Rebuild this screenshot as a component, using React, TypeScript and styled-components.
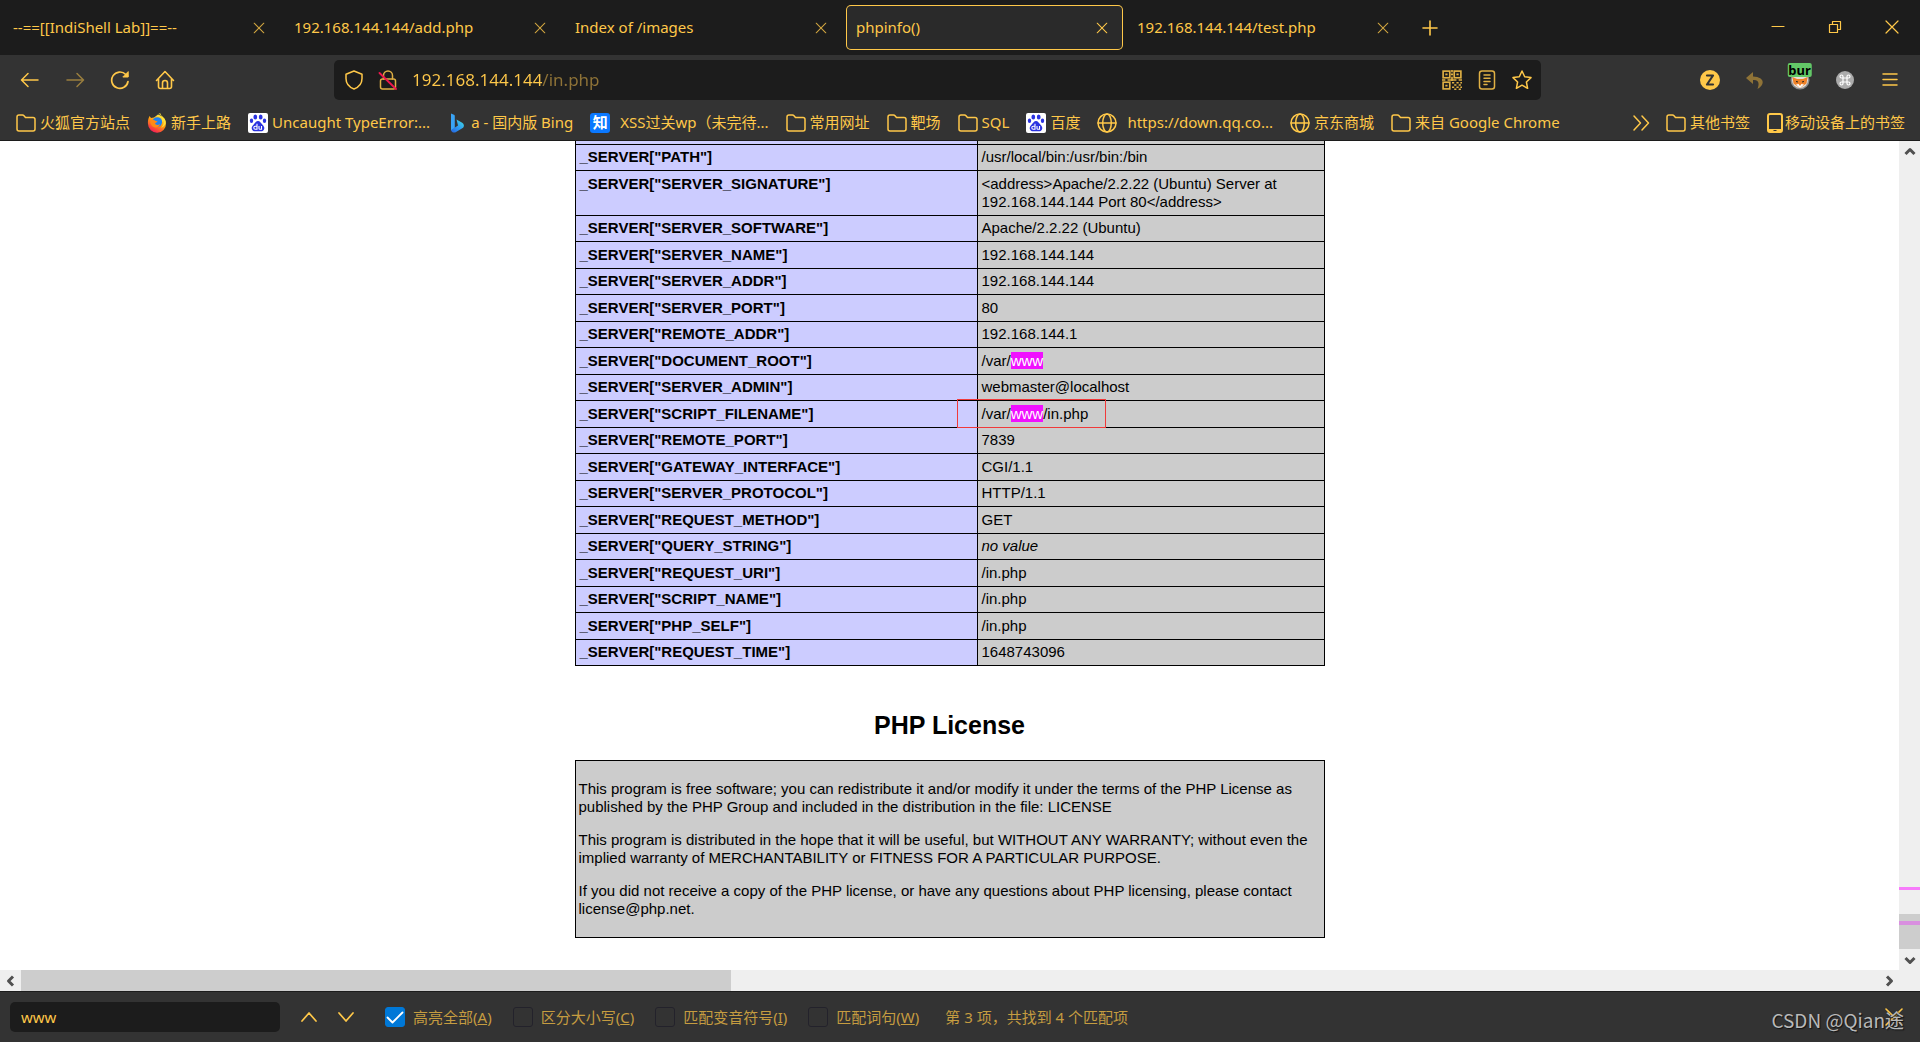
import React, { ReactNode } from "react";
import styled, { createGlobalStyle, css } from "styled-components";

const gold = "#ffc849";
const goldDim = "#c59c40";
const ui = `"Noto Sans", "Noto Sans CJK SC", sans-serif`;

const Global = createGlobalStyle`
  *, *::before, *::after { box-sizing: border-box; }
  html, body, #root { height: 100%; }
  body { margin: 0; overflow: hidden; font-family: ${ui}; font-size: 15px; color: ${gold}; }
  button { border: 0; background: none; padding: 0; margin: 0; color: inherit; font: inherit; display: flex; align-items: center; justify-content: center; }
  svg { display: block; flex: none; }
`;

const Browser = styled.div`
  display: flex;
  flex-direction: column;
  height: 100%;
  background: #333333;
`;

/* ---------- tab strip ---------- */
const TabStrip = styled.header`
  display: flex;
  align-items: center;
  height: 55px;
  flex: none;
  padding-left: 3px;
  background: #1c1c1c;
`;
const Tab = styled.div<{ $active?: boolean }>`
  display: flex;
  align-items: center;
  width: 277px;
  height: 45px;
  margin-right: 4px;
  padding: 0 13px 0 10px;
  border-radius: 5px;
  ${(p) => p.$active && css`
    background: #2a2a2a;
    box-shadow: inset 0 0 0 1px ${gold};
  `}
`;
const TabTitle = styled.button`
  && { flex: 1; justify-content: flex-start; padding-bottom: 2px; }
  white-space: nowrap;
`;
const TabClose = styled.button<{ $dim?: boolean }>`
  width: 16px;
  height: 16px;
  opacity: ${(p) => (p.$dim ? 0.8 : 1)};
`;
const NewTab = styled.button`
  width: 44px;
  height: 44px;
`;
const WindowButtons = styled.div`
  display: flex;
  margin-left: auto;
`;
const WindowButton = styled.button`
  width: 57px;
  height: 55px;
  && { padding-bottom: 2px; }
`;

/* ---------- navigation ---------- */
const NavBar = styled.nav`
  display: flex;
  align-items: center;
  height: 50px;
  flex: none;
  padding: 0 8px 0 7px;
`;
const NavButtons = styled.div`
  display: flex;
  flex: 1 1 327px;
`;
const NavButton = styled.button<{ $dim?: boolean }>`
  width: 45px;
  height: 40px;
  opacity: ${(p) => (p.$dim ? 0.5 : 1)};
`;
const AddressBar = styled.div`
  display: flex;
  align-items: center;
  flex: 1 1 1207px;
  height: 40px;
  padding: 0 9px 0 10px;
  gap: 14px;
  border-radius: 5px;
  background: #1c1c1c;
`;
const AddressInput = styled.input`
  flex: 1;
  min-width: 0;
  height: 24px;
  padding: 0;
  border: 0;
  outline: 0;
  color: transparent;
  background: linear-gradient(90deg, ${gold} 130px, #8f7337 130px);
  background-clip: text;
  -webkit-background-clip: text;
  font-family: ${ui};
  font-size: 17px;
  line-height: 24px;
`;
const AddressActions = styled.div`
  display: flex;
  gap: 15px;
`;
const Extensions = styled.div`
  display: flex;
  justify-content: flex-end;
  flex: 1 1 371px;
`;
const Badge = styled.span`
  position: absolute;
  left: 50%;
  top: 3px;
  transform: translateX(-50%);
  padding: 0 1px;
  border-radius: 2px;
  background: #63c867;
  color: #000;
  font-size: 13px;
  font-weight: 700;
  line-height: 14px;
`;
const ExtensionButton = styled.button`
  position: relative;
  width: 45px;
  height: 40px;
`;

/* ---------- bookmarks ---------- */
const BookmarkBar = styled.nav`
  display: flex;
  align-items: center;
  height: 36px;
  flex: none;
  padding: 0 15px 0 16px;
  border-bottom: 1px solid #1c1c1c;
`;
const Bookmark = styled.a<{ $gap?: number }>`
  display: flex;
  align-items: center;
  gap: ${(p) => p.$gap ?? 4}px;
  margin-right: 17px;
  color: inherit;
  text-decoration: none;
  white-space: nowrap;
  line-height: 20px;
  &:last-child { margin-right: 0; }
`;
const BookmarkLabel = styled.span`
  padding-bottom: 2px;
`;
const Overflow = styled.button`
  width: 20px;
  height: 24px;
  && { margin: 0 15px 0 auto; }
`;

/* ---------- page ---------- */
const Viewport = styled.div`
  display: grid;
  grid-template-columns: 1fr 21px;
  grid-template-rows: 1fr 21px;
  flex: 1;
  min-height: 0;
  background: #efefef;
`;
const Page = styled.main`
  overflow: hidden;
  background: #fff;
  color: #000;
  font-family: "Liberation Sans", Arial, sans-serif;
  line-height: 18px;
`;
const Info = styled.table`
  position: relative;
  width: 750px;
  margin: 0 auto;
  border-collapse: collapse;
  table-layout: fixed;
`;
const KeyColumn = styled.col`
  width: 402px;
`;
const cell = css`
  padding: 3px 4px 4px;
  border: 1px solid #000;
  text-align: left;
  vertical-align: top;
`;
const Key = styled.th`
  ${cell}
  background: #ccccff;
`;
const Value = styled.td`
  ${cell}
  position: relative;
  background: #cccccc;
`;
const Row = styled.tr`
  &:nth-child(odd) > * { padding-top: 4px; }
`;
const CutRow = styled.tr`
  height: 3px;
  > * { border-top: 0; padding: 0; }
`;
const Hit = styled.mark`
  background: #f010ff;
  color: #fff;
`;
const Outline = styled.span`
  position: absolute;
  left: -21px;
  top: -2px;
  width: 149px;
  height: 29px;
  border: 1px solid #f03a3a;
`;
const Heading = styled.h2`
  margin: 43px 0 19px;
  font-size: 25px;
  line-height: 32px;
  text-align: center;
`;
const License = styled.section`
  width: 750px;
  margin: 0 auto;
  padding: 4px 3px;
  border: 1px solid #000;
  background: #cccccc;
  p { margin: 15px 0; }
`;

/* ---------- scroll bars ---------- */
const VerticalBar = styled.div`
  display: flex;
  flex-direction: column;
`;
const HorizontalBar = styled.div`
  display: flex;
`;
const ScrollButton = styled.button`
  width: 21px;
  height: 21px;
  flex: none;
  && { color: #505050; }
`;
const VerticalTrack = styled.div`
  position: relative;
  display: flex;
  flex-direction: column;
  justify-content: flex-end;
  flex: 1;
`;
const VerticalThumb = styled.div`
  height: 35px;
  background: #cdcdcd;
`;
const FindMark = styled.div<{ $bottom: number; $height: number; $color: string }>`
  position: absolute;
  left: 0;
  right: 0;
  bottom: ${(p) => p.$bottom}px;
  height: ${(p) => p.$height}px;
  background: ${(p) => p.$color};
`;
const HorizontalTrack = styled.div`
  flex: 1;
`;
const HorizontalThumb = styled.div`
  width: 38.25%;
  height: 100%;
  background: #cdcdcd;
`;

/* ---------- find bar ---------- */
const FindBar = styled.footer`
  position: relative;
  display: flex;
  align-items: center;
  height: 51px;
  flex: none;
  padding: 0 16px 0 10px;
  border-top: 1px solid #1c1c1c;
  color: ${goldDim};
`;
const FindInput = styled.input`
  width: 270px;
  height: 30px;
  margin-right: 10px;
  padding: 0 11px;
  border: 0;
  border-radius: 5px;
  background: #1c1c1c;
  color: ${gold};
  font: inherit;
`;
const FindStep = styled.button`
  width: 37px;
  height: 30px;
  && { color: ${gold}; }
`;
const Option = styled.label`
  display: flex;
  align-items: center;
  gap: 8px;
  margin-left: 21px;
  white-space: nowrap;
`;
const OptionBox = styled.input`
  appearance: none;
  width: 20px;
  height: 20px;
  margin: 0;
  border: 1px solid #23222b;
  border-radius: 3px;
  &:checked {
    border-color: #0078d7;
    background: #0078d7;
  }
`;
const BoxWrap = styled.span`
  display: grid;
  > * { grid-area: 1 / 1; }
  svg { z-index: 1; pointer-events: none; }
`;
const FindText = styled.span`
  padding-bottom: 2px;
`;
const Status = styled.span`
  margin-left: 26px;
  padding-bottom: 2px;
`;
const FindClose = styled.button`
  width: 20px;
  height: 20px;
  && { margin-left: auto; color: ${gold}; }
`;
const Watermark = styled.span`
  position: absolute;
  right: 16px;
  bottom: 8px;
  color: #b9b9b9;
  font-size: 19px;
  line-height: 28px;
  text-shadow: 1px 1px 1px #111;
  font-family: "Noto Sans CJK SC", sans-serif;
`;

/* ---------- icons ---------- */
type IconProps = { size?: number; w?: number; box?: number; children: ReactNode };
const Icon = ({ size = 20, w = 1.5, box = 20, children }: IconProps) => (
  <svg width={size} height={size} viewBox={`0 0 ${box} ${box}`} fill="none" stroke="currentColor" strokeWidth={w} strokeLinecap="round" strokeLinejoin="round" aria-hidden="true">
    {children}
  </svg>
);
const Cross = ({ size = 20, inset = 5, w = 1.3 }) => (
  <Icon size={size} w={w}><path d={`M${inset} ${inset} L${20 - inset} ${20 - inset} M${20 - inset} ${inset} L${inset} ${20 - inset}`} /></Icon>
);
const Folder = () => <Icon><path d="M1 4a2 2 0 0 1 2-2h3.500a2 2 0 0 1 1.500.7L9.500 4.500H17a2 2 0 0 1 2 2V16a2 2 0 0 1-2 2H3a2 2 0 0 1-2-2z" /></Icon>;
const Globe = () => <Icon><circle cx="10" cy="10" r="9" /><ellipse cx="10" cy="10" rx="4.3" ry="9" /><path d="M1 10h18" /></Icon>;
const Firefox = () => (
  <svg width="20" height="20" viewBox="0 0 20 20" aria-hidden="true">
    <defs>
      <linearGradient id="fox" x1="0.8" y1="0.1" x2="0.3" y2="1"><stop offset="0" stopColor="#ffe83b" /><stop offset=".45" stopColor="#ff980e" /><stop offset="1" stopColor="#f5155a" /></linearGradient>
    </defs>
    <path d="M1.500 5.500 2.500 3l1.500 2L7 4.500 11 1.500c2 .5 3.500 1.500 5 3 1.900 1.500 3 3.500 3 6A9 9 0 0 1 1 11C.8 9 1 7 1.500 5.500z" fill="url(#fox)" />
    <circle cx="10.300" cy="9" r="4.800" fill="#2080f0" />
    <path d="M7 4.800c-1 .5-1.500 1.500-1.500 2.400 1.200-.3 2.500 0 3.300.7l1.800.4c-.3 1.300-2.300 1.300-2.500 2.500.9 1.500 3.200 1.400 4.900.2-.6 2.700-2.800 3.700-5 3.400C4.500 13.800 3 10.500 3.500 7.500z" fill="#ff8a16" />
    <path d="M11.500.8c3 1.200 4.700 4.500 3.500 8.200.8-.4 1.200-1 1.400-1.800 1 3-.2 5.800-2.400 7.600 4-1 5.500-5 4-8.300C17 4 14 3.500 13.300.3z" fill="#ffe23a" />
  </svg>
);
const Baidu = () => (
  <svg width="20" height="20" viewBox="0 0 20 20" aria-hidden="true">
    <rect width="20" height="20" rx="2" fill="#fff" />
    <g fill="#2a32e0"><ellipse cx="7.300" cy="4" rx="1.900" ry="2.600" /><ellipse cx="12.700" cy="4" rx="1.900" ry="2.600" /><ellipse cx="3.500" cy="7.800" rx="1.700" ry="2.300" /><ellipse cx="16.500" cy="7.800" rx="1.700" ry="2.300" /><path d="M10 8c2 0 2.800 2 4.300 3.400 2.200 2 2.500 4 1.400 5.500-1.200 1.700-3.200 1.400-5.700 1.400s-4.500.3-5.700-1.400c-1.100-1.500-.8-3.500 1.400-5.500C7.200 10 8 8 10 8z" /></g>
    <path d="M9 10.800v5.400H7.300a1.500 1.500 0 0 1 0-3H9M11 13v2.400q0 .9.900.9H13.500V13" fill="none" stroke="#fff" strokeWidth="1.100" />
  </svg>
);
const Bing = () => (
  <svg width="20" height="20" viewBox="0 0 20 20" aria-hidden="true">
    <defs><linearGradient id="bing" x1="0" y1="1" x2="1" y2="0"><stop offset="0" stopColor="#2563e0" /><stop offset=".5" stopColor="#2f9df0" /><stop offset="1" stopColor="#43e0e0" /></linearGradient></defs>
    <path d="M4 0.500 7 1.800q.8.400.8 1.300v12.200L4 17.500z" fill="#3aa4f5" />
    <path d="M9.500 6.500l5.700 3.200a3.300 3.300 0 0 1 .9 5L8.200 19.400A3.200 3.200 0 0 1 4 17l7-4.400z" fill="url(#bing)" />
  </svg>
);
const ZhihuBadge = styled.span`
  width: 20px;
  height: 20px;
  border-radius: 3px;
  background: #0a78ff;
  color: #fff;
  font-size: 15px;
  font-weight: 700;
  line-height: 19px;
  text-align: center;
`;
const Phone = () => (
  <svg width="16" height="20" viewBox="0 0 16 20" aria-hidden="true">
    <rect x="1" y="1" width="14" height="18" rx="2" fill="none" stroke="currentColor" strokeWidth="2" />
    <path d="M1 16h14v2q0 1-1 1H2q-1 0-1-1z" fill="currentColor" /><rect x="6.500" y="17" width="3" height="1" fill="#333" />
  </svg>
);
const QrCode = () => (
  <svg width="20" height="20" viewBox="0 0 18 18" fill="none" stroke="#e0b044" strokeWidth="1.500" aria-hidden="true">
    <rect x="1" y="1" width="6" height="6" /><rect x="11" y="1" width="6" height="6" /><rect x="1" y="11" width="6" height="6" />
    <path d="M3 4h2M13 4h2M3 14h2M9 0v2M8 4h2M9 6v4M0 9h3M5 9h8M15 9h3M9 11.500h2M13 11.500h2M16.500 11.500h1.500M11 13.500h2M15 13.500h2M9 15.500h2M13 15.500h2M16.500 15.500h1.500M11 17.300h2M15 17.300h2" />
  </svg>
);
const FoxyProxy = () => (
  <svg width="20" height="20" viewBox="0 0 20 20" aria-hidden="true">
    <circle cx="10" cy="10" r="9.500" fill="#8d8d8d" /><circle cx="10" cy="10" r="8" fill="#e6ded8" />
    <path d="M2.500 7 7 9h6l4.500-2-1 6.500L10 18l-6.500-4.500z" fill="#f08228" /><path d="M6 14.500l2.500-.5 1.500 2 1.500-2 2.500.5-4 3.500z" fill="#fff" />
    <path d="M6 11.500l2 .5M14 11.500l-2 .5" stroke="#222" />
  </svg>
);

const tabs = ["--==[[IndiShell Lab]]==--", "192.168.144.144/add.php", "Index of /images", "phpinfo()", "192.168.144.144/test.php"];

const bookmarks: { icon: ReactNode; label: string; gap?: number }[] = [
  { icon: <Folder />, label: "火狐官方站点" },
  { icon: <Firefox />, label: "新手上路" },
  { icon: <Baidu />, label: "Uncaught TypeError:..." },
  { icon: <Bing />, label: "a - 国内版 Bing" },
  { icon: <ZhihuBadge>知</ZhihuBadge>, label: "XSS过关wp（未完待...", gap: 10 },
  { icon: <Folder />, label: "常用网址" },
  { icon: <Folder />, label: "靶场" },
  { icon: <Folder />, label: "SQL" },
  { icon: <Baidu />, label: "百度" },
  { icon: <Globe />, label: "https://down.qq.co...", gap: 10 },
  { icon: <Globe />, label: "京东商城" },
  { icon: <Folder />, label: "来自 Google Chrome" },
];

const server: [string, ReactNode][] = [
  ["PATH", "/usr/local/bin:/usr/bin:/bin"],
  ["SERVER_SIGNATURE", "<address>Apache/2.2.22 (Ubuntu) Server at 192.168.144.144 Port 80</address>"],
  ["SERVER_SOFTWARE", "Apache/2.2.22 (Ubuntu)"],
  ["SERVER_NAME", "192.168.144.144"],
  ["SERVER_ADDR", "192.168.144.144"],
  ["SERVER_PORT", "80"],
  ["REMOTE_ADDR", "192.168.144.1"],
  ["DOCUMENT_ROOT", <>/var/<Hit>www</Hit></>],
  ["SERVER_ADMIN", "webmaster@localhost"],
  ["SCRIPT_FILENAME", <>/var/<Hit>www</Hit>/in.php<Outline /></>],
  ["REMOTE_PORT", "7839"],
  ["GATEWAY_INTERFACE", "CGI/1.1"],
  ["SERVER_PROTOCOL", "HTTP/1.1"],
  ["REQUEST_METHOD", "GET"],
  ["QUERY_STRING", <i>no value</i>],
  ["REQUEST_URI", "/in.php"],
  ["SCRIPT_NAME", "/in.php"],
  ["PHP_SELF", "/in.php"],
  ["REQUEST_TIME", "1648743096"],
];

const options = [
  { text: "高亮全部", key: "A", on: true },
  { text: "区分大小写", key: "C", on: false },
  { text: "匹配变音符号", key: "I", on: false },
  { text: "匹配词句", key: "W", on: false },
];

export default function App() {
  return (
    <Browser>
      <Global />
      <TabStrip>
        {tabs.map((title) => (
          <Tab key={title} $active={title === "phpinfo()"}>
            <TabTitle>{title}</TabTitle>
            <TabClose $dim={title !== "phpinfo()"} aria-label="关闭标签页"><Cross size={16} inset={4} /></TabClose>
          </Tab>
        ))}
        <NewTab aria-label="新建标签页"><Icon w={1.6}><path d="M10 3v14M3 10h14" /></Icon></NewTab>
        <WindowButtons>
          <WindowButton aria-label="最小化"><Icon w={1.2}><path d="M4 9.500h12" /></Icon></WindowButton>
          <WindowButton aria-label="还原"><Icon w={1.2}><path d="M4.500 7.500h8v8h-8zM7.500 7.500v-3h8v8h-3" /></Icon></WindowButton>
          <WindowButton aria-label="关闭"><Cross inset={4} w={1.2} /></WindowButton>
        </WindowButtons>
      </TabStrip>

      <NavBar>
        <NavButtons>
          <NavButton aria-label="后退"><Icon><path d="M18 10H2M8 3.500 1.500 10 8 16.500" /></Icon></NavButton>
          <NavButton aria-label="前进" $dim><Icon><path d="M2 10h16M12 3.500 18.500 10 12 16.500" /></Icon></NavButton>
          <NavButton aria-label="刷新"><Icon w={1.7}><path d="M18 11.500A8.200 8.200 0 1 1 15.800 4.500L17.500 6" /><path d="M18.200 2v5h-5z" fill="currentColor" strokeWidth="1" /></Icon></NavButton>
          <NavButton aria-label="主页"><Icon w={1.6}><path d="M1.500 10.500 10 1.500l8.500 9M3.500 9v7.500a2 2 0 0 0 2 2h9a2 2 0 0 0 2-2V9M7.500 18v-5a2.500 2.500 0 0 1 5 0v5" /></Icon></NavButton>
        </NavButtons>
        <AddressBar>
          <Icon><path d="M10 1 2 4.200v4.300c0 5 3.300 8.700 8 10.500 4.700-1.800 8-5.500 8-10.500V4.200z" /></Icon>
          <Icon><g stroke="#e0b044"><rect x="2.500" y="9" width="15" height="10" rx="2" /><path d="M5.500 9V5.500a4.500 4.500 0 0 1 9 0V9" /></g><path d="M1.500 3 18 19" stroke="#f0164e" strokeWidth="1.800" /></Icon>
          <AddressInput aria-label="地址" defaultValue="192.168.144.144/in.php" />
          <AddressActions>
            <QrCode />
            <Icon><g stroke="#e0b044"><rect x="2.500" y="1" width="15" height="18" rx="2.500" /><path d="M7 5h6M7 8.300h6M7 11.600h6M7 14.500h3" /></g></Icon>
            <Icon><path d="m10 1 2.700 5.800 6.300.8-4.600 4.400 1.200 6.300L10 15.200l-5.600 3.100L5.600 12 1 7.600l6.300-.8z" /></Icon>
          </AddressActions>
        </AddressBar>
        <Extensions>
          <ExtensionButton aria-label="Z"><Icon><circle cx="10" cy="10" r="10" fill={gold} stroke="none" /><path d="M7 5.500h6L7 14.500h6" stroke="#333" strokeWidth="2.200" /></Icon></ExtensionButton>
          <ExtensionButton aria-label="撤销"><Icon><path d="M8 2 1 8l7 6v-4c5-.4 7 2 4.500 9 8-5 7-12-4.500-12.500z" fill="#8f7337" stroke="none" /></Icon></ExtensionButton>
          <ExtensionButton><FoxyProxy /><Badge>bur</Badge></ExtensionButton>
          <ExtensionButton aria-label="快捷键"><Icon><circle cx="10" cy="10" r="9" fill="#ababab" stroke="none" /><path d="M8 8h4v4H8zM8 8H6.500A1.500 1.500 0 1 1 8 6.500zM12 8V6.500A1.500 1.500 0 1 1 13.500 8zM12 12h1.500a1.500 1.500 0 1 1-1.500 1.500zM8 12v1.500A1.500 1.500 0 1 1 6.500 12z" stroke="#fff" strokeWidth="1.200" /></Icon></ExtensionButton>
          <ExtensionButton aria-label="菜单"><Icon><path d="M3 4h14M3 9.500h14M3 15h14" /></Icon></ExtensionButton>
        </Extensions>
      </NavBar>

      <BookmarkBar>
        {bookmarks.map((b) => (
          <Bookmark key={b.label} href="#" $gap={b.gap}>{b.icon}<BookmarkLabel>{b.label}</BookmarkLabel></Bookmark>
        ))}
        <Overflow aria-label="更多书签"><Icon><path d="m3 3 6.500 7L3 17M11 3l6.500 7-6.500 7" /></Icon></Overflow>
        <Bookmark href="#"><Folder /><BookmarkLabel>其他书签</BookmarkLabel></Bookmark>
        <Bookmark href="#" $gap={2}><Phone /><BookmarkLabel>移动设备上的书签</BookmarkLabel></Bookmark>
      </BookmarkBar>

      <Viewport>
        <Page>
          <Info>
            <colgroup><KeyColumn /><col /></colgroup>
            <tbody>
              <CutRow><Key /><Value /></CutRow>
              {server.map(([name, value]) => (
                <Row key={name}><Key scope="row">{`_SERVER["${name}"]`}</Key><Value>{value}</Value></Row>
              ))}
            </tbody>
          </Info>
          <Heading>PHP License</Heading>
          <License>
            <p>This program is free software; you can redistribute it and/or modify it under the terms of the PHP License as published by the PHP Group and included in the distribution in the file: LICENSE</p>
            <p>This program is distributed in the hope that it will be useful, but WITHOUT ANY WARRANTY; without even the implied warranty of MERCHANTABILITY or FITNESS FOR A PARTICULAR PURPOSE.</p>
            <p>If you did not receive a copy of the PHP license, or have any questions about PHP licensing, please contact license@php.net.</p>
          </License>
        </Page>
        <VerticalBar>
          <ScrollButton aria-label="向上滚动"><Icon w={3}><path d="m5.500 12 4.500-4.500 4.500 4.500" strokeLinecap="butt" /></Icon></ScrollButton>
          <VerticalTrack>
            <VerticalThumb />
            <FindMark $bottom={59} $height={3} $color="#f77bfb" />
            <FindMark $bottom={24} $height={4} $color="#d98fe0" />
          </VerticalTrack>
          <ScrollButton aria-label="向下滚动"><Icon w={3}><path d="m5.500 8 4.500 4.500L14.500 8" strokeLinecap="butt" /></Icon></ScrollButton>
        </VerticalBar>
        <HorizontalBar>
          <ScrollButton aria-label="向左滚动"><Icon w={3}><path d="M12 5.500 7.500 10l4.500 4.500" strokeLinecap="butt" /></Icon></ScrollButton>
          <HorizontalTrack><HorizontalThumb /></HorizontalTrack>
          <ScrollButton aria-label="向右滚动"><Icon w={3}><path d="M8 5.500 12.500 10 8 14.500" strokeLinecap="butt" /></Icon></ScrollButton>
        </HorizontalBar>
      </Viewport>

      <FindBar>
        <FindInput defaultValue="www" aria-label="在页面中查找" />
        <FindStep aria-label="上一个"><Icon w={1.7}><path d="m3 14 7-8 7 8" /></Icon></FindStep>
        <FindStep aria-label="下一个"><Icon w={1.7}><path d="m3 6 7 8 7-8" /></Icon></FindStep>
        {options.map((o) => (
          <Option key={o.key}>
            <BoxWrap>
              <OptionBox type="checkbox" defaultChecked={o.on} />
              {o.on && <Icon w={1.8}><g stroke="#fff"><path d="m2.500 10.500 5 5 10-10" /></g></Icon>}
            </BoxWrap>
            <FindText>{o.text}(<u>{o.key}</u>)</FindText>
          </Option>
        ))}
        <Status>第 3 项，共找到 4 个匹配项</Status>
        <FindClose aria-label="关闭查找栏"><Cross inset={2} w={1.6} /></FindClose>
        <Watermark>CSDN @Qian途</Watermark>
      </FindBar>
    </Browser>
  );
}
